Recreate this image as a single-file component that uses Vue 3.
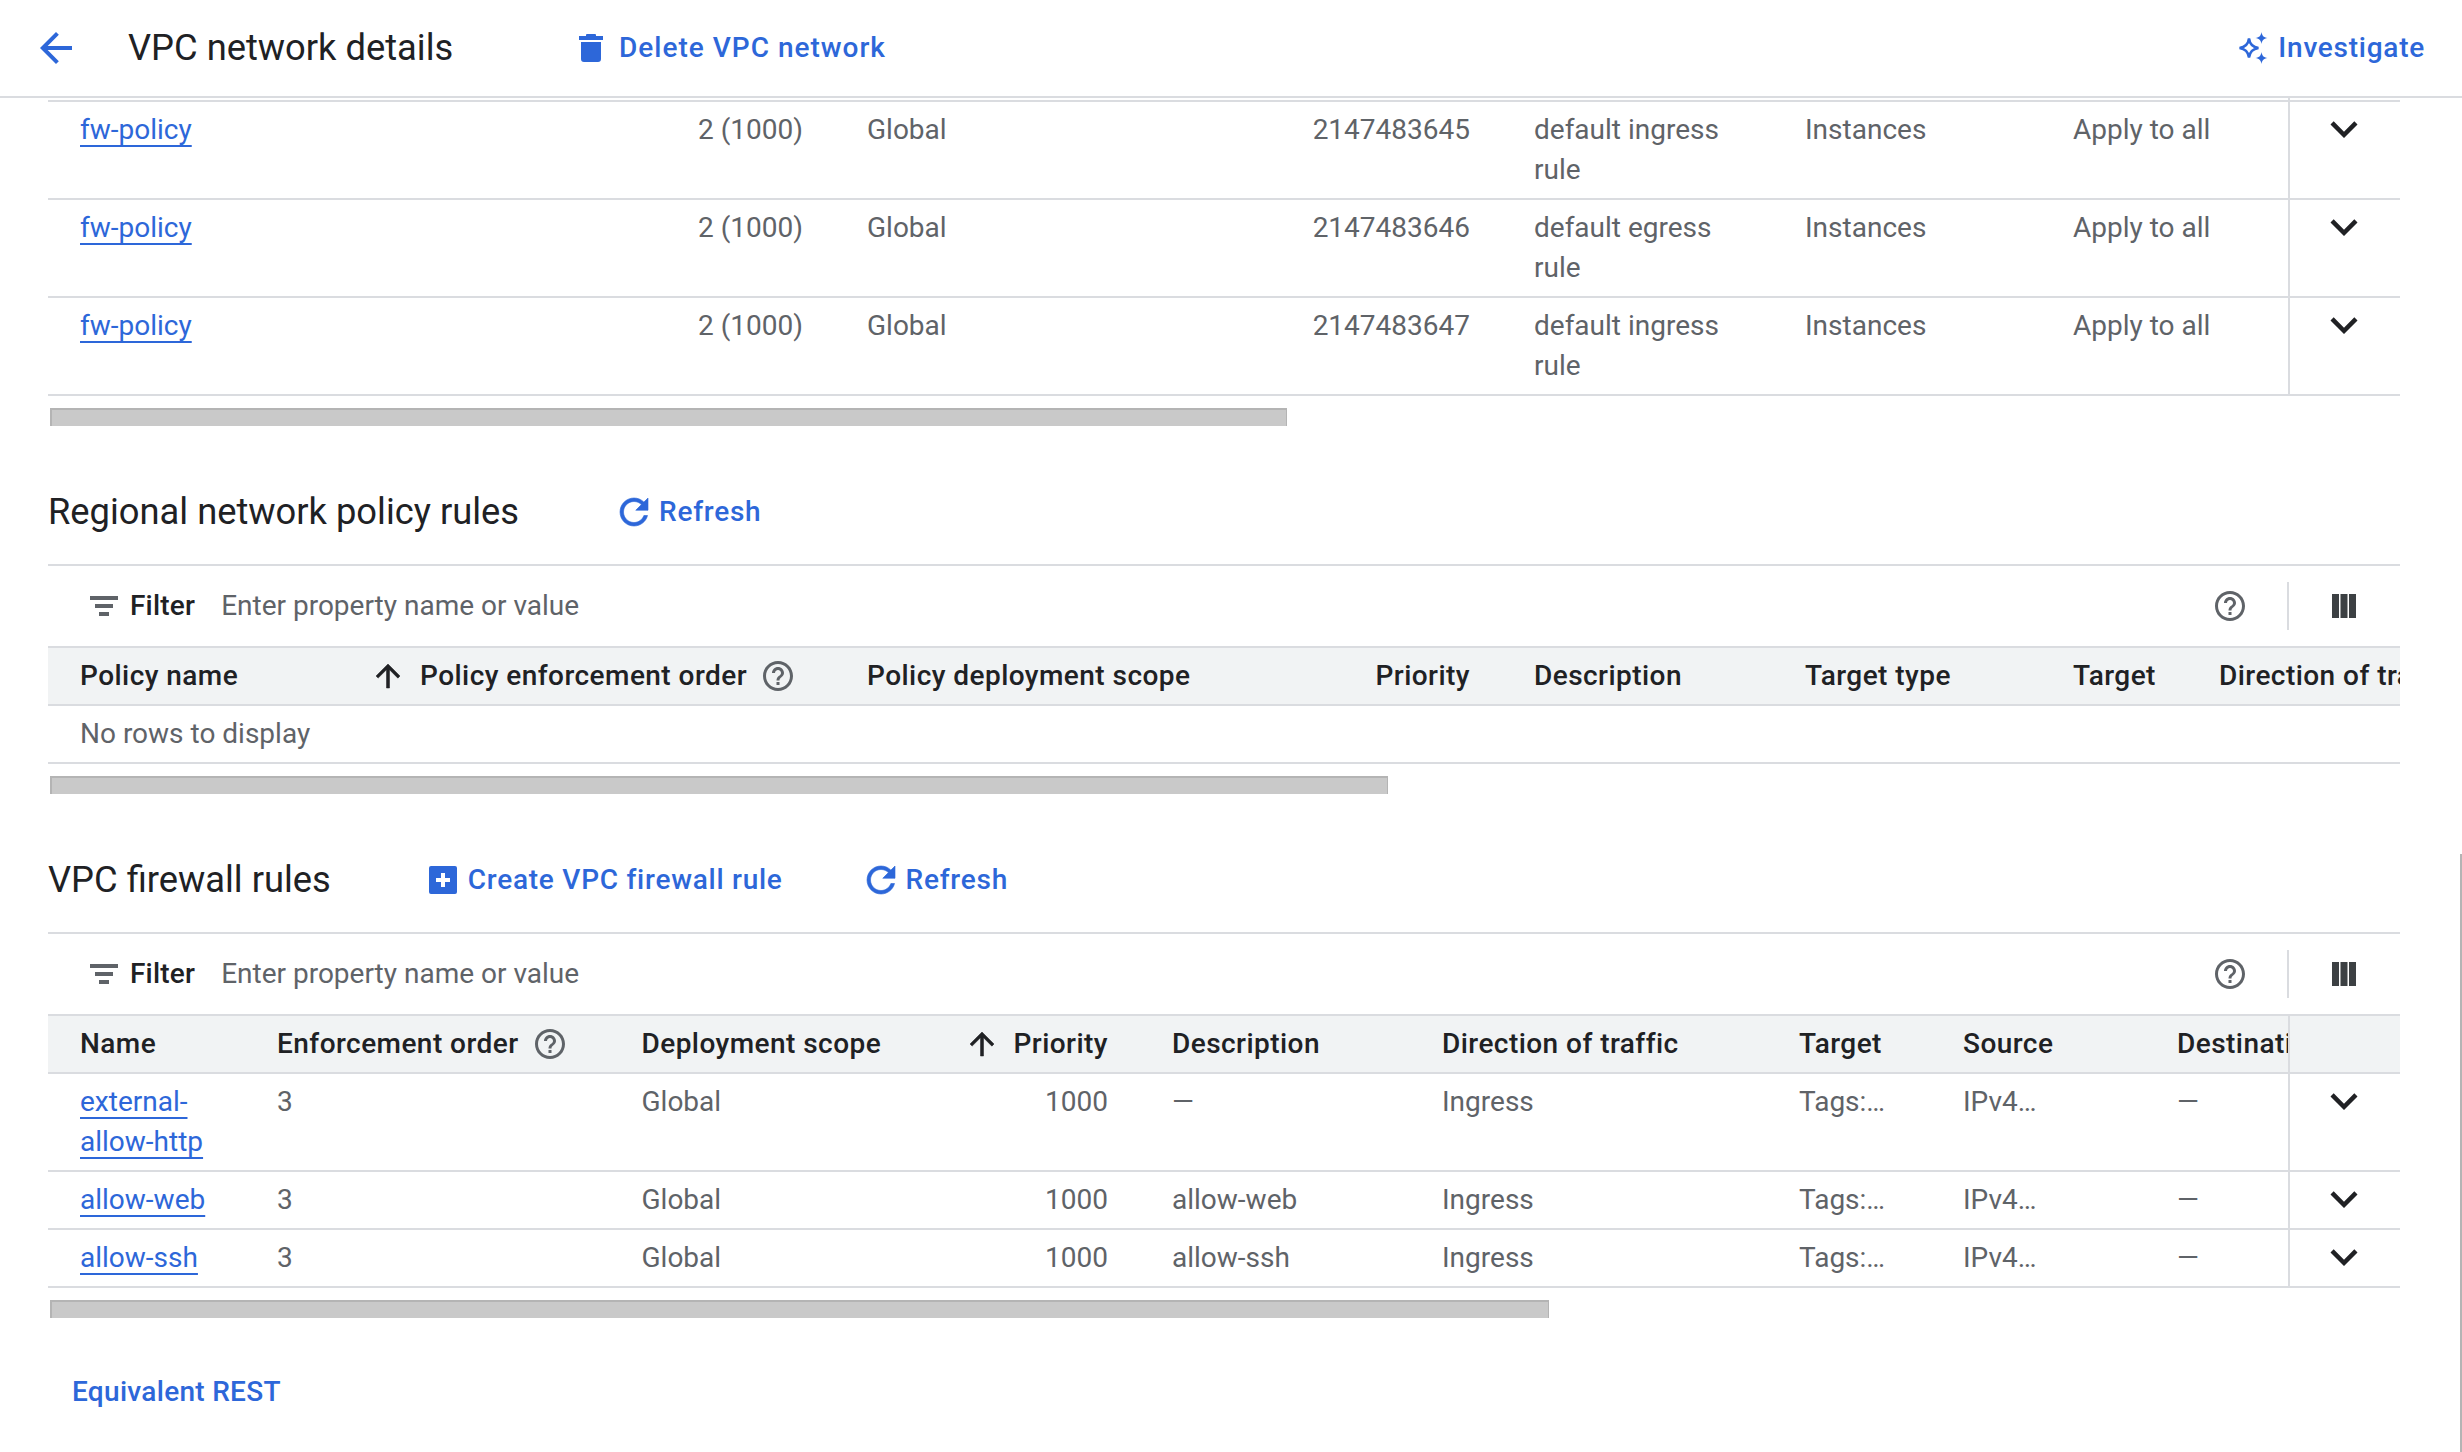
<script setup>
const icons = {
  back: "M20 11H7.83l5.59-5.59L12 4l-8 8 8 8 1.41-1.41L7.83 13H20v-2z",
  refresh: "M17.65 6.35C16.2 4.9 14.21 4 12 4c-4.42 0-7.99 3.58-7.99 8s3.57 8 7.99 8c3.73 0 6.84-2.55 7.73-6h-2.08c-.82 2.33-3.04 4-5.65 4-3.31 0-6-2.69-6-6s2.69-6 6-6c1.66 0 3.14.69 4.22 1.78L13 11h7V4l-2.35 2.35z",
  help: "M11 18h2v-2h-2v2zm1-16C6.48 2 2 6.48 2 12s4.48 10 10 10 10-4.48 10-10S17.52 2 12 2zm0 18c-4.41 0-8-3.59-8-8s3.59-8 8-8 8 3.59 8 8-3.59 8-8 8zm0-14c-2.21 0-4 1.79-4 4h2c0-1.1.9-2 2-2s2 .9 2 2c0 2-3 1.75-3 5h2c0-2.25 3-2.5 3-5 0-2.21-1.79-4-4-4z",
  chevron: "M16.59 8.59L12 13.17 7.41 8.59 6 10l6 6 6-6z",
  arrowUp: "M4 12l1.41 1.41L11 7.83V20h2V7.83l5.58 5.59L20 12l-8-8-8 8z"
}

const globalRules = [
  { priority: "2147483645", description: "default ingress rule" },
  { priority: "2147483646", description: "default egress rule" },
  { priority: "2147483647", description: "default ingress rule" }
]

const vpcRules = [
  { name: "external-allow-http", description: "—" },
  { name: "allow-web", description: "allow-web" },
  { name: "allow-ssh", description: "allow-ssh" }
]
</script>

<template>
  <div class="page">
    <header class="topbar">
      <svg class="back" viewBox="0 0 24 24"><path :d="icons.back" /></svg>
      <h1 class="title">VPC network details</h1>
      <a class="action delete">
        <svg class="trash" viewBox="0 0 24 28"><path d="M7 2V1a1 1 0 0 1 1-1h8a1 1 0 0 1 1 1v1h7v4H0V2zM2 8h20v17a3 3 0 0 1-3 3H5a3 3 0 0 1-3-3z" /></svg>
        Delete VPC network
      </a>
      <a class="action investigate">
        <svg class="spark" viewBox="0 0 30 32">
          <path class="spark-big" d="M11 6.500C11.800 12.500 14.500 15.200 20.500 16 14.500 16.800 11.800 19.500 11 25.500 10.200 19.500 7.500 16.800 1.500 16 7.500 15.200 10.200 12.500 11 6.500z" />
          <path d="M23.500 0C24 3.500 25.500 5.500 29.500 6 25.500 6.500 24 8.500 23.500 12 23 8.500 21.500 6.500 17.500 6 21.500 5.500 23 3.500 23.500 0z" />
          <path d="M23.500 20C24 23.500 25.500 25.500 29.500 26 25.500 26.500 24 28.500 23.500 32 23 28.500 21.500 26.500 17.500 26 21.500 25.500 23 23.500 23.500 20z" />
        </svg>
        Investigate
      </a>
    </header>

    <main class="content">
      <section class="table t-global">
        <div v-for="rule in globalRules" :key="rule.priority" class="row body-row">
          <div class="cells">
            <div class="cell"><a class="link">fw-policy</a></div>
            <div class="cell right">2 (1000)</div>
            <div class="cell">Global</div>
            <div class="cell right">{{ rule.priority }}</div>
            <div class="cell wrap">{{ rule.description }}</div>
            <div class="cell">Instances</div>
            <div class="cell">Apply to all</div>
          </div>
          <div class="frozen">
            <svg class="chevron" viewBox="0 0 24 24"><path :d="icons.chevron" /></svg>
          </div>
        </div>
      </section>
      <div class="hscroll bar-global"></div>

      <div class="section-head">
        <h2 class="heading">Regional network policy rules</h2>
        <a class="action refresh-first">
          <svg class="refresh" viewBox="0 0 24 24"><path :d="icons.refresh" /></svg>
          Refresh
        </a>
      </div>
      <div class="filterbar">
        <svg class="filter-icon" viewBox="0 0 28 20"><path d="M0 0h28v4H0zM5 8h18v4H5zM9 16h10v4H9z" /></svg>
        <span class="filter-label">Filter</span>
        <span class="filter-hint">Enter property name or value</span>
        <svg class="help bar-help" viewBox="0 0 24 24"><path :d="icons.help" /></svg>
        <span class="bar-divider"></span>
        <svg class="columns" viewBox="0 0 24 24"><path d="M0 0h7v24H0zM8.500 0h7v24h-7zM17 0h7v24h-7z" /></svg>
      </div>
      <section class="table t-regional">
        <div class="row head-row">
          <div class="cells">
            <div class="cell">Policy name</div>
            <div class="cell with-icons">
              <svg class="arrow" viewBox="0 0 24 24"><path :d="icons.arrowUp" /></svg>
              Policy enforcement order
              <svg class="help" viewBox="0 0 24 24"><path :d="icons.help" /></svg>
            </div>
            <div class="cell">Policy deployment scope</div>
            <div class="cell right">Priority</div>
            <div class="cell">Description</div>
            <div class="cell">Target type</div>
            <div class="cell">Target</div>
            <div class="cell">Direction of traffic</div>
          </div>
        </div>
        <div class="empty">No rows to display</div>
      </section>
      <div class="hscroll bar-regional"></div>

      <div class="section-head">
        <h2 class="heading">VPC firewall rules</h2>
        <a class="action create">
          <svg class="plus" viewBox="0 0 28 28"><path d="M2 0h24a2 2 0 0 1 2 2v24a2 2 0 0 1-2 2H2a2 2 0 0 1-2-2V2a2 2 0 0 1 2-2zm10 7v5H7v4h5v5h4v-5h5v-4h-5V7z" /></svg>
          Create VPC firewall rule
        </a>
        <a class="action refresh-second">
          <svg class="refresh" viewBox="0 0 24 24"><path :d="icons.refresh" /></svg>
          Refresh
        </a>
      </div>
      <div class="filterbar">
        <svg class="filter-icon" viewBox="0 0 28 20"><path d="M0 0h28v4H0zM5 8h18v4H5zM9 16h10v4H9z" /></svg>
        <span class="filter-label">Filter</span>
        <span class="filter-hint">Enter property name or value</span>
        <svg class="help bar-help" viewBox="0 0 24 24"><path :d="icons.help" /></svg>
        <span class="bar-divider"></span>
        <svg class="columns" viewBox="0 0 24 24"><path d="M0 0h7v24H0zM8.500 0h7v24h-7zM17 0h7v24h-7z" /></svg>
      </div>
      <section class="table t-vpc">
        <div class="row head-row">
          <div class="cells">
            <div class="cell">Name</div>
            <div class="cell with-icons">
              Enforcement order
              <svg class="help" viewBox="0 0 24 24"><path :d="icons.help" /></svg>
            </div>
            <div class="cell">Deployment scope</div>
            <div class="cell with-icons priority-head">
              <svg class="arrow" viewBox="0 0 24 24"><path :d="icons.arrowUp" /></svg>
              Priority
            </div>
            <div class="cell">Description</div>
            <div class="cell">Direction of traffic</div>
            <div class="cell">Target</div>
            <div class="cell">Source</div>
            <div class="cell">Destination</div>
          </div>
          <div class="frozen"></div>
        </div>
        <div v-for="rule in vpcRules" :key="rule.name" class="row body-row">
          <div class="cells">
            <div class="cell wrap"><a class="link">{{ rule.name }}</a></div>
            <div class="cell">3</div>
            <div class="cell">Global</div>
            <div class="cell right">1000</div>
            <div class="cell">{{ rule.description }}</div>
            <div class="cell">Ingress</div>
            <div class="cell">Tags:…</div>
            <div class="cell">IPv4…</div>
            <div class="cell">—</div>
          </div>
          <div class="frozen">
            <svg class="chevron" viewBox="0 0 24 24"><path :d="icons.chevron" /></svg>
          </div>
        </div>
      </section>
      <div class="hscroll bar-vpc"></div>

      <a class="rest">Equivalent REST</a>
    </main>
    <div class="page-scroll"></div>
  </div>
</template>

<style scoped>
.page,
.page * {
  box-sizing: border-box;
}

.page {
  position: relative;
  width: 2462px;
  height: 1452px;
  overflow: hidden;
  background: #fff;
  color: #5f6368;
  font-family: Roboto, "Liberation Sans", sans-serif;
  font-size: 28px;
  line-height: 40px;
}

a {
  color: #2d67d9;
}

svg {
  flex: none;
  fill: currentColor;
}

.topbar {
  display: flex;
  align-items: center;
  height: 98px;
  padding: 0 37px 0 32px;
  border-bottom: 2px solid #dadce0;
}

.back {
  width: 48px;
  height: 48px;
  color: #2d67d9;
}

.title {
  width: 451px;
  margin: 0 0 0 48px;
  color: #202124;
  font-size: 36.3px;
  font-weight: 400;
}

.action {
  display: flex;
  align-items: center;
  font-weight: 500;
  letter-spacing: 0.75px;
}

.delete {
  letter-spacing: 1px;
}

.trash {
  width: 24px;
  height: 28px;
  margin-right: 16px;
}

.investigate {
  margin-left: auto;
}

.spark {
  width: 30px;
  height: 32px;
  margin-right: 10px;
}

.spark-big {
  fill: none;
  stroke: currentColor;
  stroke-width: 2.5;
}

.content {
  padding: 2px 62px 0 48px;
}

.table {
  border-top: 2px solid #dadce0;
}

.row {
  display: flex;
  border-bottom: 2px solid #dadce0;
}

.cells {
  flex: 1;
  min-width: 0;
  display: grid;
  overflow: hidden;
}

.t-global .cells {
  grid-template-columns: 296px 491px 389px 278px 271px 268px 248px;
}

.t-regional .cells {
  grid-template-columns: 296px 491px 389px 278px 271px 268px 146px 400px;
}

.t-vpc .cells {
  grid-template-columns: 197px 364.5px 326.5px 204px 270px 357px 164px 214px 144px;
}

.cell {
  padding: 8px 32px 0;
  white-space: nowrap;
}

.cell.wrap {
  white-space: normal;
}

.right {
  text-align: right;
}

.frozen {
  position: relative;
  flex: none;
  width: 112px;
  padding-right: 2px;
  border-left: 2px solid #dadce0;
}

.chevron {
  display: block;
  width: 54px;
  height: 54px;
  margin: 0 auto;
  color: #202124;
}

.link {
  text-decoration: underline;
  text-decoration-thickness: 2px;
  text-decoration-skip-ink: none;
  text-underline-offset: 6px;
}

.t-global .body-row {
  height: 98px;
}

.t-global .frozen::before {
  content: "";
  position: absolute;
  top: -4px;
  left: -2px;
  width: 2px;
  height: 4px;
  background: #dadce0;
}

.t-vpc .body-row {
  height: 58px;
}

.t-vpc .body-row:nth-child(2) {
  height: 98px;
}

.head-row {
  height: 58px;
  background: #f1f3f4;
  color: #202124;
  font-weight: 500;
  letter-spacing: 0.45px;
}

.with-icons {
  display: flex;
  align-items: flex-start;
}

.arrow {
  width: 36px;
  height: 36px;
  margin: 2px 14px 0 -6px;
}

.arrow path,
.refresh path {
  stroke: currentColor;
  stroke-width: 0.35;
}

.help {
  width: 36px;
  height: 36px;
  margin: 2px 0 0 13px;
  color: #5f6368;
}

.priority-head {
  justify-content: flex-end;
}

.empty {
  height: 58px;
  padding: 8px 32px 0;
  border-bottom: 2px solid #dadce0;
}

.hscroll {
  height: 18px;
  margin-top: 12px;
  background: #c9c9c9;
  border-top: 2px solid #b4b4b4;
  border-left: 2px solid #b4b4b4;
  border-right: 1px solid #b4b4b4;
}

.bar-global {
  width: 1237px;
  margin-left: 2px;
}

.bar-regional {
  width: 1338px;
  margin-left: 2px;
}

.bar-vpc {
  width: 1499px;
  margin-left: 2px;
}

.section-head {
  display: flex;
  align-items: center;
  height: 80px;
  margin: 46px 0 12px;
}

.heading {
  margin: 0;
  color: #202124;
  font-size: 36.3px;
  font-weight: 400;
}

.refresh {
  width: 42px;
  height: 42px;
  margin: 0 4px 0 -7px;
}

.refresh-first {
  margin-left: 101px;
}

.plus {
  width: 28px;
  height: 28px;
  margin-right: 11px;
}

.create {
  margin-left: 98px;
}

.refresh-second {
  margin-left: 84px;
}

.filterbar {
  display: flex;
  align-items: center;
  height: 82px;
  padding-left: 42px;
  border-top: 2px solid #dadce0;
}

.filter-icon {
  width: 28px;
  height: 20px;
  color: #5f6368;
}

.filter-label {
  margin-left: 12px;
  color: #202124;
  font-weight: 500;
  letter-spacing: 0.2px;
}

.filter-hint {
  margin-left: 26px;
}

.bar-help {
  margin: 0 0 0 auto;
}

.bar-divider {
  width: 2px;
  height: 48px;
  margin: 0 43.5px 0 39px;
  background: #dadce0;
}

.columns {
  width: 24px;
  height: 24px;
  margin-right: 44px;
  color: #3c4043;
}

.rest {
  display: inline-block;
  margin: 54px 0 0 24px;
  font-weight: 500;
  letter-spacing: 0.3px;
}

.page-scroll {
  position: absolute;
  top: 854px;
  right: 0;
  bottom: 0;
  width: 2px;
  background: #b4b4b4;
}
</style>
